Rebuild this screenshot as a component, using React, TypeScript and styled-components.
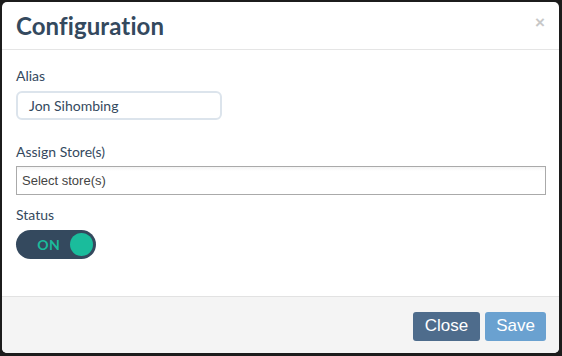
import React from "react";
import styled, { createGlobalStyle } from "styled-components";

const Global = createGlobalStyle`
  html, body { margin: 0; padding: 0; background: #1c1c1c; }
  body { width: 562px; height: 356px; overflow: hidden; }
  * { box-sizing: border-box; }
`;

const Frame = styled.div`
  padding: 2px 3px 3px 2px;
  width: 562px;
  height: 356px;
`;

const Modal = styled.div`
  width: 557px;
  height: 351px;
  background: #fff;
  border-radius: 5px;
  overflow: hidden;
  display: flex;
  flex-direction: column;
  font-family: Lato, "Open Sans", sans-serif;
  color: #34495e;
`;

const Header = styled.div`
  height: 48px;
  padding: 0 14px;
  display: flex;
  align-items: center;
  justify-content: space-between;
  border-bottom: 1px solid #e5e5e5;
`;

const Title = styled.h4`
  margin: 0;
  font-size: 24px;
  font-weight: 700;
  color: #34495e;
  letter-spacing: 0.1px;
`;

const CloseX = styled.span`
  font-family: "Liberation Sans", Arial, sans-serif;
  font-size: 17px;
  font-weight: 700;
  color: #c8c8c8;
  margin-top: -5px;
`;

const Body = styled.div`
  flex: 1;
  padding: 17px 14px 0 14px;
  display: flex;
  flex-direction: column;
`;

const Label = styled.label<{ $space: number }>`
  font-size: 14px;
  line-height: 18px;
  color: #34495e;
  margin-bottom: ${(p) => p.$space}px;
`;

const Field = styled.div<{ $gap: number }>`
  display: flex;
  flex-direction: column;
  margin-bottom: ${(p) => p.$gap}px;
`;

const TextInput = styled.div`
  width: 206px;
  height: 29px;
  border: 2px solid #dce4ec;
  border-radius: 6px;
  padding: 0 11px;
  display: flex;
  align-items: center;
  font-size: 14px;
  color: #34495e;
`;

const Select = styled.div`
  width: 530px;
  height: 29px;
  border: 1px solid #aaaaaa;
  padding: 0 5px;
  display: flex;
  align-items: center;
  font-family: "Liberation Sans", Arial, sans-serif;
  font-size: 13px;
  color: #444;
  background: linear-gradient(#f4f4f4 0, #fff 4px);
`;

const Toggle = styled.div`
  width: 80px;
  height: 29px;
  border-radius: 15px;
  background: #34495e;
  display: flex;
  align-items: center;
  justify-content: flex-end;
  padding: 0 3px 0 0;
  gap: 10px;
`;

const ToggleText = styled.span`
  font-size: 14px;
  font-weight: 700;
  color: #1abc9c;
  letter-spacing: 0.3px;
`;

const Knob = styled.span`
  width: 23px;
  height: 23px;
  border-radius: 50%;
  background: #1abc9c;
`;

const Footer = styled.div`
  height: 57px;
  border-top: 1px solid #e2e2e2;
  background: #f4f4f4;
  display: flex;
  align-items: center;
  justify-content: flex-end;
  padding: 0 13px 0 0;
  gap: 5px;
`;

const Button = styled.button<{ $variant: "close" | "save" }>`
  height: 29px;
  padding: 0 ${(p) => (p.$variant === "close" ? 12 : 11)}px;
  border: none;
  border-radius: 3px;
  font-family: "Liberation Sans", Arial, sans-serif;
  font-size: 17px;
  color: #fff;
  background: ${(p) => (p.$variant === "close" ? "#4e6c8c" : "#6aa1d0")};
  margin-top: 2px;
`;

export default function App() {
  return (
    <>
      <Global />
      <Frame>
        <Modal>
          <Header>
            <Title>Configuration</Title>
            <CloseX>×</CloseX>
          </Header>
          <Body>
            <Field $gap={23}>
              <Label $space={6}>Alias</Label>
              <TextInput>Jon Sihombing</TextInput>
            </Field>
            <Field $gap={11}>
              <Label $space={5}>Assign Store(s)</Label>
              <Select>Select store(s)</Select>
            </Field>
            <Field $gap={0}>
              <Label $space={6}>Status</Label>
              <Toggle>
                <ToggleText>ON</ToggleText>
                <Knob />
              </Toggle>
            </Field>
          </Body>
          <Footer>
            <Button $variant="close">Close</Button>
            <Button $variant="save">Save</Button>
          </Footer>
        </Modal>
      </Frame>
    </>
  );
}
